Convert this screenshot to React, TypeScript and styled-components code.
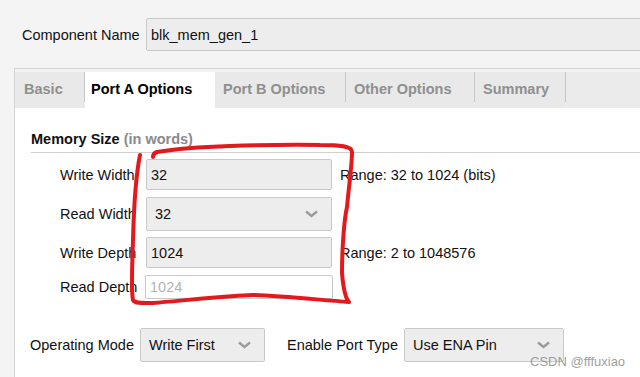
import React from "react";
import styled, { createGlobalStyle } from "styled-components";

const GlobalStyle = createGlobalStyle`
  body {
    margin: 0;
    background: #f4f4f4;
    font-family: "Liberation Sans", Arial, sans-serif;
    color: #111;
  }
`;

const Page = styled.div`
  position: relative;
  width: 640px;
  height: 377px;
  overflow: hidden;
  background: #f4f4f4;
  font-size: 14.5px;
`;

const NameRow = styled.div`
  display: flex;
  align-items: center;
  padding: 18px 0 0 22px;
`;

const NameLabel = styled.span`
  width: 124px;
`;

const TextBox = styled.div<{ $w?: number; $h?: number; $disabled?: boolean }>`
  box-sizing: border-box;
  width: ${(p) => (p.$w ? `${p.$w}px` : "auto")};
  height: ${(p) => p.$h ?? 31}px;
  display: flex;
  align-items: center;
  padding-left: 4px;
  border: 1px solid #c9c9c9;
  border-radius: 2px;
  background: ${(p) => (p.$disabled ? "#fff" : "#ededed")};
  color: ${(p) => (p.$disabled ? "#b3b3b3" : "#111")};
`;

const NameBox = styled(TextBox)`
  flex: 1;
  height: 33px;
  margin-right: -10px;
`;

const Panel = styled.div`
  margin: 17px 0 0 14px;
  border-top: 1px solid #d3d3d3;
  border-left: 1px solid #d3d3d3;
  background: #fff;
  height: 320px;
`;

const TabStrip = styled.div`
  display: flex;
  background: #ebebeb;
  border-top: 3px solid #f3f3f3;
  padding-left: 1px;
`;

const Tab = styled.div<{ $active?: boolean; $w: number }>`
  position: relative;
  box-sizing: border-box;
  width: ${(p) => p.$w}px;
  height: 36px;
  padding: 0 0 3px ${(p) => (p.$active ? 6 : 8)}px;
  display: flex;
  align-items: center;
  font-weight: bold;
  color: ${(p) => (p.$active ? "#000" : "#8f8f8f")};
  background: ${(p) => (p.$active ? "#fff" : "#e9e9e9")};

  &::after {
    content: "";
    position: absolute;
    right: 0;
    top: 0;
    height: 30px;
    width: 1px;
    background: ${(p) => (p.$active ? "transparent" : "#c6c6c6")};
  }
`;

const Content = styled.div`
  padding: 23px 0 0 16px;
`;

const SectionTitle = styled.div`
  font-weight: bold;
  padding-bottom: 5px;
  border-bottom: 1px solid #d0d0d0;
`;

const Muted = styled.span`
  color: #8a8a8a;
`;

const FormGrid = styled.div`
  display: grid;
  grid-template-columns: 86px 186px auto;
  row-gap: 6.5px;
  align-items: center;
  padding: 6px 0 0 29px;
`;

const FieldLabel = styled.span`
  white-space: nowrap;
`;

const RangeText = styled.span`
  padding-left: 8px;
  white-space: nowrap;
`;

const SelectBox = styled.div<{ $w: number }>`
  box-sizing: border-box;
  width: ${(p) => p.$w}px;
  height: 34px;
  display: flex;
  align-items: center;
  justify-content: space-between;
  padding: 0 13px 0 8px;
  border: 1px solid #c9c9c9;
  border-radius: 2px;
  background: #ededed;
`;

const BottomRow = styled.div`
  display: flex;
  align-items: center;
  padding-top: 29px;
  margin-left: -1px;
`;

const InlineLabel = styled.span<{ $gap: number }>`
  margin-right: 6px;
  margin-left: ${(p) => p.$gap}px;
`;

const Watermark = styled.div`
  position: absolute;
  left: 530px;
  top: 354px;
  font-size: 13px;
  color: rgba(140, 140, 140, 0.85);
`;

const Overlay = styled.svg`
  position: absolute;
  left: 0;
  top: 0;
  pointer-events: none;
`;

const Chevron = () => (
  <svg width="13" height="8" viewBox="0 0 13 8">
    <polyline points="1,1.5 6.5,6 12,1.5" fill="none" stroke="#9b9b9b" strokeWidth="2.4" />
  </svg>
);

export default function App() {
  return (
    <Page>
      <GlobalStyle />
      <NameRow>
        <NameLabel>Component Name</NameLabel>
        <NameBox>blk_mem_gen_1</NameBox>
      </NameRow>
      <Panel>
        <TabStrip>
          <Tab $w={69}>Basic</Tab>
          <Tab $w={130} $active>
            Port A Options
          </Tab>
          <Tab $w={131}>Port B Options</Tab>
          <Tab $w={129}>Other Options</Tab>
          <Tab $w={91}>Summary</Tab>
        </TabStrip>
        <Content>
          <SectionTitle>
            Memory Size <Muted>(in words)</Muted>
          </SectionTitle>
          <FormGrid>
            <FieldLabel>Write Width</FieldLabel>
            <TextBox $w={186}>32</TextBox>
            <RangeText>Range: 32 to 1024 (bits)</RangeText>

            <FieldLabel>Read Width</FieldLabel>
            <SelectBox $w={186}>
              <span>32</span>
              <Chevron />
            </SelectBox>
            <span />

            <FieldLabel>Write Depth</FieldLabel>
            <TextBox $w={186}>1024</TextBox>
            <RangeText>Range: 2 to 1048576</RangeText>

            <FieldLabel>Read Depth</FieldLabel>
            <TextBox $w={188} $h={24} $disabled style={{ marginLeft: -1 }}>
              1024
            </TextBox>
            <span />
          </FormGrid>
          <BottomRow>
            <InlineLabel $gap={0}>Operating Mode</InlineLabel>
            <SelectBox $w={125}>
              <span>Write First</span>
              <Chevron />
            </SelectBox>
            <InlineLabel $gap={22}>Enable Port Type</InlineLabel>
            <SelectBox $w={160}>
              <span>Use ENA Pin</span>
              <Chevron />
            </SelectBox>
          </BottomRow>
        </Content>
      </Panel>
      <Overlay width="640" height="377" viewBox="0 0 640 377">
        <path
          d="M140 155 C137 170 134 200 133 240 C132 270 131 292 133 300 C135 304 145 303 153 303 C180 301 210 297 253 295 C285 296 320 300 349 302 C345 298 343 285 342 273 C342 250 344 220 347 207 C349 185 352 165 352 152 C352 146 340 145 320 145 C290 144 260 145 230 146 C200 147 175 149 157 152 C154 153 153 155 153 157"
          fill="none"
          stroke="#e3191d"
          strokeWidth="4"
          strokeLinecap="round"
          strokeLinejoin="round"
        />
      </Overlay>
      <Watermark>CSDN @fffuxiao</Watermark>
    </Page>
  );
}
